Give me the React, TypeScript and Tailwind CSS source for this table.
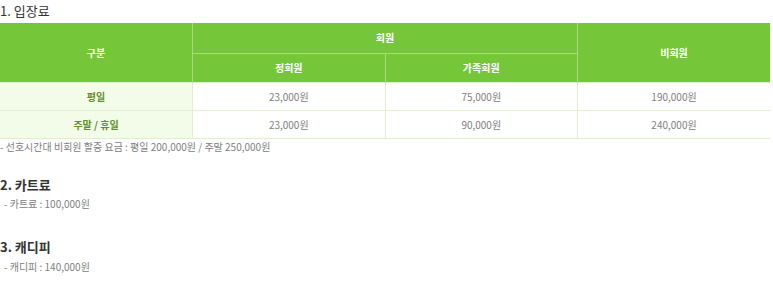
import React from 'react';

const font = { fontFamily: '"Noto Sans CJK KR", "Noto Sans", sans-serif' };

const rows = [
  { label: '평일', regular: '23,000원', family: '75,000원', guest: '190,000원' },
  { label: '주말 / 휴일', regular: '23,000원', family: '90,000원', guest: '240,000원' },
];

export default function App() {
  return (
    <div className="w-[773px] h-[281px] bg-white text-[#333]" style={font}>
      <h3 className="text-[13px] leading-[20px] h-[23px] pt-[1px] font-normal">1. 입장료</h3>

      <table className="w-[770px] table-fixed border-collapse text-[10px]">
        <thead>
          <tr className="h-[30px]">
            <th rowSpan={2} className="bg-[#76c63a] text-white font-bold border-r border-[#a6db80]">구분</th>
            <th colSpan={2} className="bg-[#76c63a] text-white font-bold border-r border-b border-[#a6db80]">회원</th>
            <th rowSpan={2} className="bg-[#76c63a] text-white font-bold">비회원</th>
          </tr>
          <tr className="h-[29px]">
            <th className="bg-[#76c63a] text-white font-bold border-r border-[#a6db80]">정회원</th>
            <th className="bg-[#76c63a] text-white font-bold border-r border-[#a6db80]">가족회원</th>
          </tr>
        </thead>
        <tbody>
          {rows.map(r => (
            <tr key={r.label} className="h-[28px] border-t border-b border-[#dff0cc]">
              <td className="bg-[#f3fce9] text-center font-bold text-[#5f8f2c] border-r border-[#dff0cc]">{r.label}</td>
              <td className="text-center text-[#808080] border-r border-[#dff0cc]">{r.regular}</td>
              <td className="text-center text-[#808080] border-r border-[#dff0cc]">{r.family}</td>
              <td className="text-center text-[#808080]">{r.guest}</td>
            </tr>
          ))}
        </tbody>
      </table>

      <p className="text-[10px] text-[#808080] leading-[18px] mt-[-1px]">- 선호시간대 비회원 할증 요금 : 평일 200,000원 / 주말 250,000원</p>

      <h3 className="text-[13px] leading-[20px] font-bold mt-[19px]">2. 카트료</h3>
      <p className="text-[10px] text-[#808080] leading-[18px] pl-[4px]">- 카트료 : 100,000원</p>

      <h3 className="text-[13px] leading-[20px] font-bold mt-[24px]">3. 캐디피</h3>
      <p className="text-[10px] text-[#808080] leading-[18px] pl-[4px] mt-[1px]">- 캐디피 : 140,000원</p>
    </div>
  );
}
